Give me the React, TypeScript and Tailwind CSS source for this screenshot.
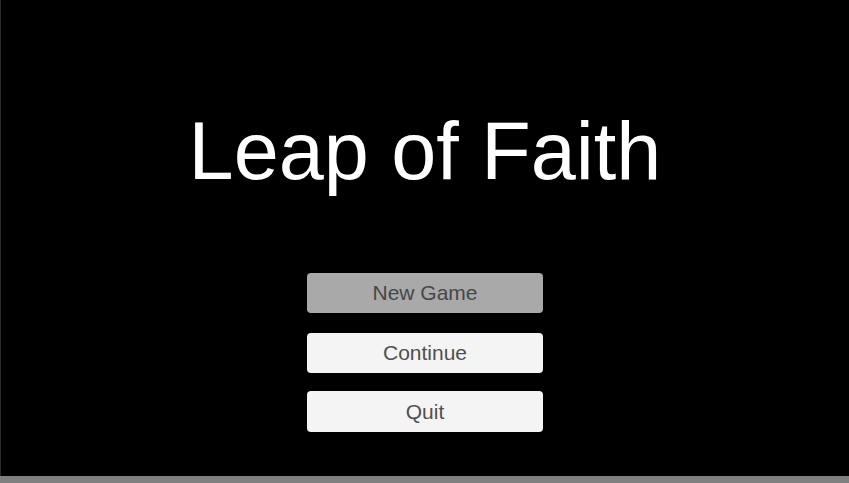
export default function App() {
  return (
    <div className="flex h-[483px] w-[849px] flex-col bg-black font-['Liberation_Sans',Arial,sans-serif]">
      <div className="flex h-[476px] flex-col items-center border-l border-[#2a2a2a]">
        <h1 className="mt-[103px] text-[81px] leading-[96px] text-white">Leap of Faith</h1>
        <div className="mt-[74px] flex flex-col">
          <button className="h-[40px] w-[236px] rounded-[4px] bg-[#a9a9a9] text-[21px] text-[#474747]">
            New Game
          </button>
          <button className="mt-[20px] h-[40px] w-[236px] rounded-[4px] bg-[#f4f4f4] text-[21px] text-[#505050]">
            Continue
          </button>
          <button className="mt-[18px] h-[41px] w-[236px] rounded-[4px] bg-[#f4f4f4] text-[21px] text-[#505050]">
            Quit
          </button>
        </div>
      </div>
      <div className="h-[7px] bg-[#808080]" />
    </div>
  );
}
